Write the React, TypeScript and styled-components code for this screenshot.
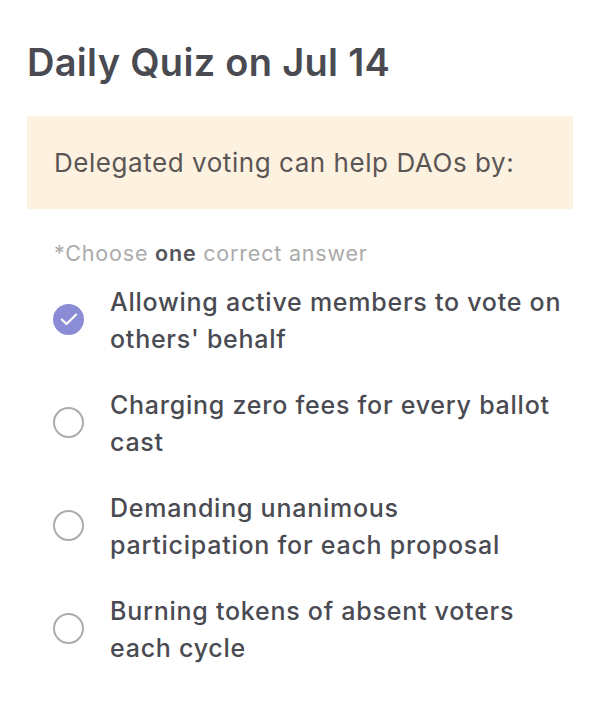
import React from 'react';
import styled, { createGlobalStyle } from 'styled-components';

const Global = createGlobalStyle`
  body {
    margin: 0;
    background: #fff;
    font-family: Inter, "Noto Sans", sans-serif;
  }
`;

const Page = styled.div`
  padding: 36px 27px 40px;
`;

const Title = styled.h1`
  margin: 0 0 28px;
  font-size: 38px;
  line-height: 52px;
  font-weight: 600;
  color: #4a4b52;
  letter-spacing: 0.3px;
`;

const Question = styled.div`
  background: #fdf1df;
  padding: 0 27px;
  height: 93px;
  display: flex;
  align-items: center;
  font-size: 26px;
  color: #5b5656;
  letter-spacing: 0.55px;
`;

const Hint = styled.div`
  margin: 31px 0 18px 27px;
  font-size: 21.5px;
  color: #ababab;
  letter-spacing: 0.8px;
  b {
    color: #55565c;
    font-weight: 600;
  }
`;

const Options = styled.ul`
  list-style: none;
  margin: 0;
  padding: 0;
  display: flex;
  flex-direction: column;
  gap: 29px;
`;

const Option = styled.li`
  display: flex;
  align-items: center;
  gap: 26px;
  padding-left: 26px;
`;

const Radio = styled.span<{ $checked?: boolean }>`
  flex: none;
  width: 31px;
  height: 31px;
  margin-top: -4px;
  box-sizing: border-box;
  border-radius: 50%;
  display: flex;
  align-items: center;
  justify-content: center;
  background: ${p => (p.$checked ? '#8a8cd5' : 'transparent')};
  border: ${p => (p.$checked ? 'none' : '2.5px solid #acacac')};
`;

const Label = styled.span`
  max-width: 454px;
  font-size: 25px;
  line-height: 37px;
  font-weight: 500;
  color: #4a4b52;
  letter-spacing: 0.75px;
`;

const answers = [
  "Allowing active members to vote on others' behalf",
  'Charging zero fees for every ballot cast',
  'Demanding unanimous participation for each proposal',
  'Burning tokens of absent voters each cycle',
];

const App = () => {
  const picked = 0;
  return (
    <Page>
      <Global />
      <Title>Daily Quiz on Jul 14</Title>
      <Question>Delegated voting can help DAOs by:</Question>
      <Hint>
        *Choose <b>one</b> correct answer
      </Hint>
      <Options>
        {answers.map((a, i) => (
          <Option key={a}>
            <Radio $checked={i === picked}>
              {i === picked && (
                <svg width="24" height="24" viewBox="0 0 16 16" fill="none">
                  <path d="M3.2 8.4l3.1 3L12.8 5" stroke="#fff" strokeWidth="1.4" strokeLinecap="round" strokeLinejoin="round" />
                </svg>
              )}
            </Radio>
            <Label>{a}</Label>
          </Option>
        ))}
      </Options>
    </Page>
  );
};

export default App;
